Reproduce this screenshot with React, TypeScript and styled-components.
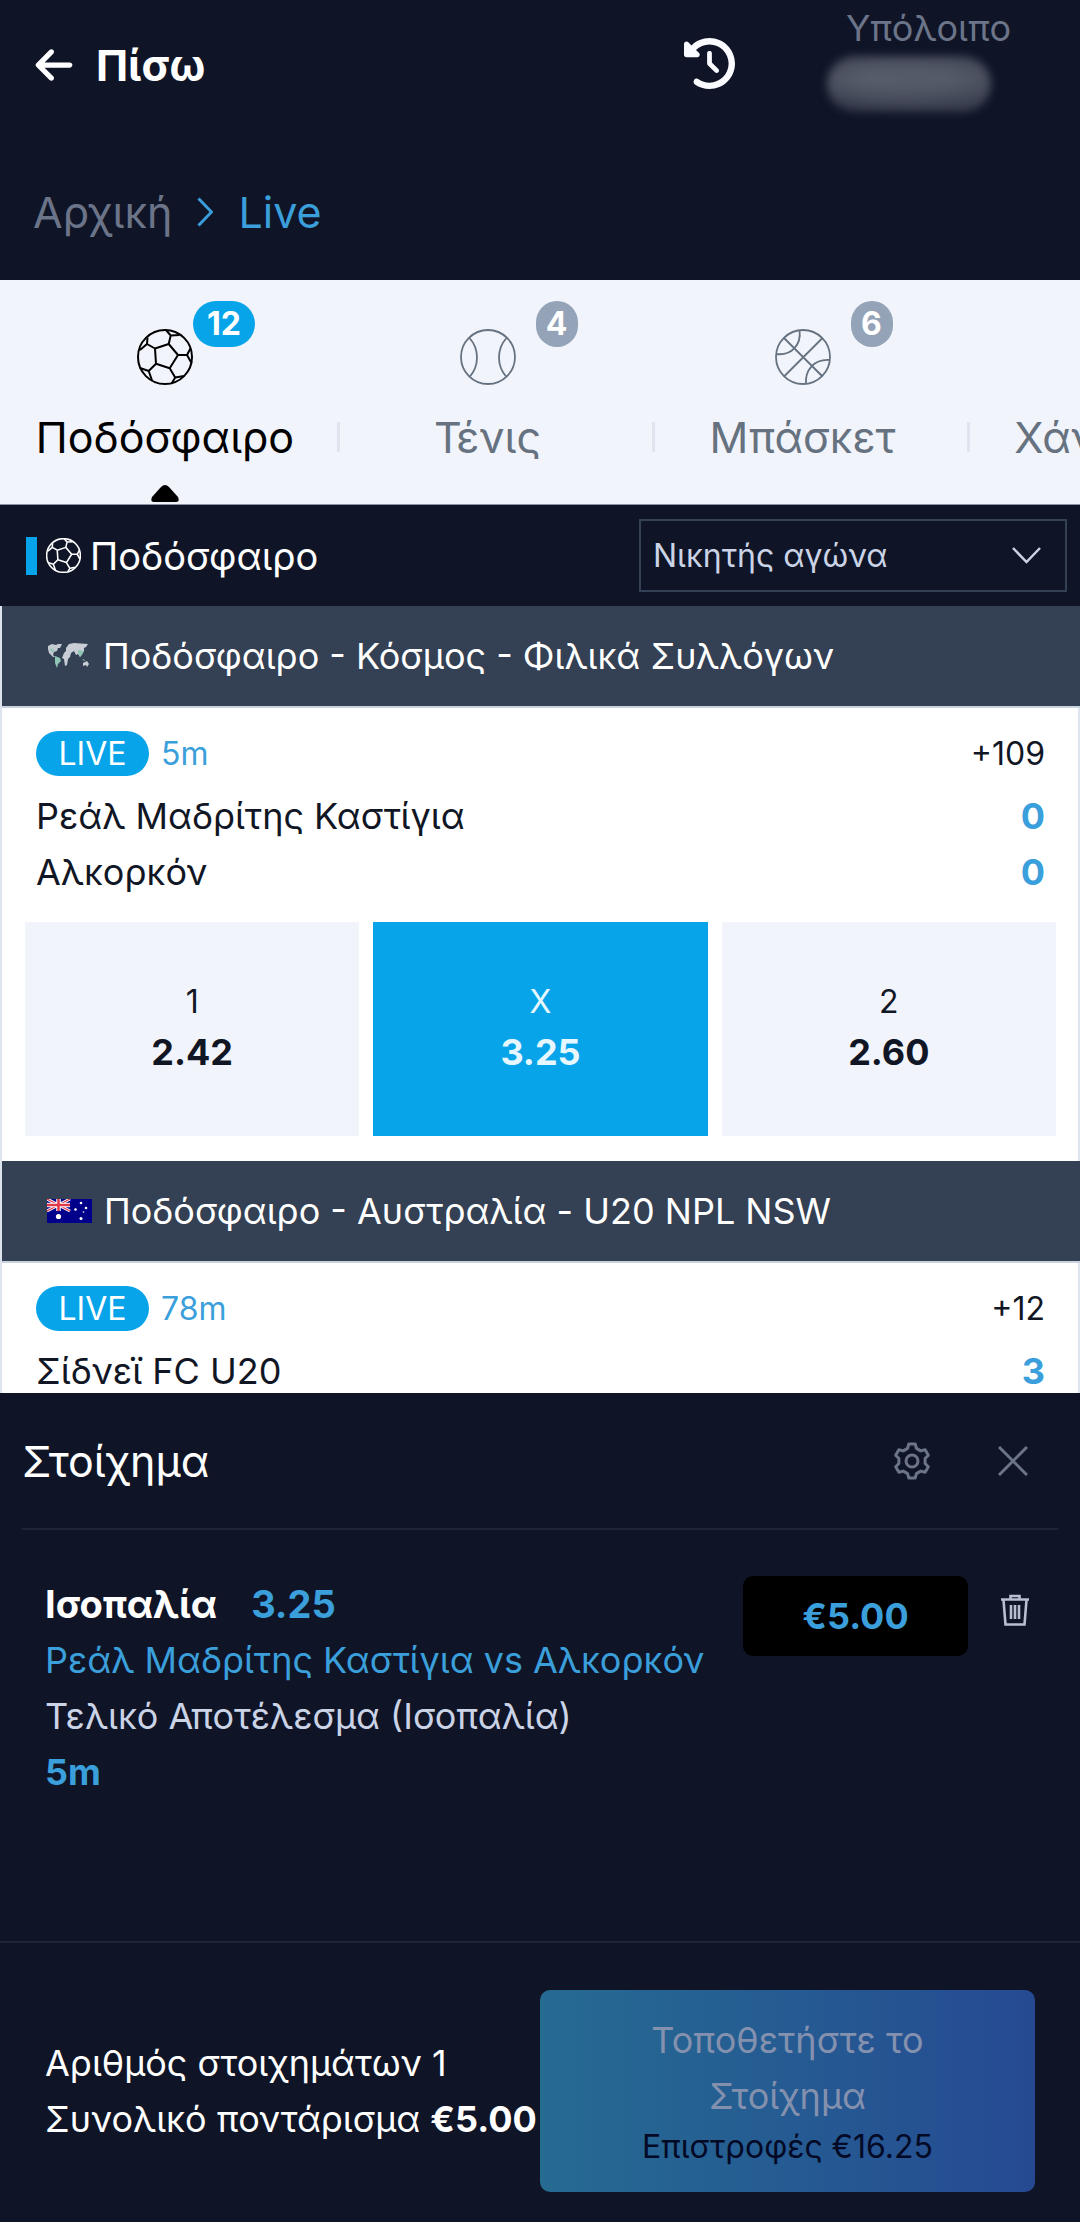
import React from "react";
import styled, { createGlobalStyle, css } from "styled-components";
import { FaArrowLeft, FaClockRotateLeft } from "react-icons/fa6";

const color = {
  night: "#0f1527",
  slate: "#344053",
  mist: "#f2f4fc",
  sky: "#08a4e9",
  link: "#3a9fda",
  muted: "#6b7488",
  tab: "#66727f",
  badge: "#94a3b8",
  line: "#1d2537",
  edge: "#dde4ee",
  pale: "#cbd3e6",
};

const size = { sm: "32px", md: "36px", title: "38px", lg: "43px" };

const Global = createGlobalStyle`
  *, *::before, *::after { box-sizing: border-box; }
  body { margin: 0; background: ${color.night}; }
  body, button, input, select { font-family: Inter, "Noto Sans", sans-serif; }
  button { border: 0; padding: 0; background: none; cursor: pointer; }
  h1, h2, h3, p { margin: 0; font-weight: 400; }
  a { text-decoration: none; color: inherit; }
  svg { display: block; flex: none; }
`;

const Page = styled.div`
  display: flex;
  flex-direction: column;
  height: 100vh;
  overflow: hidden;
  font-size: ${size.md};
  line-height: 56px;
  color: #fff;
  background: ${color.night};
`;

/* Header */
const TopBar = styled.header`
  display: flex;
  align-items: center;
  flex: none;
  height: 130px;
  padding: 0 69px 0 33px;
`;
const BackButton = styled.button`
  display: flex;
  align-items: center;
  gap: 21px;
  margin-right: auto;
  color: #fff;
  font-size: ${size.lg};
  font-weight: 700;
`;
const HistoryButton = styled.button`
  margin: 0 90px 4px 0;
  color: #fafbff;
`;
const Balance = styled.div`
  display: flex;
  flex-direction: column;
  align-items: flex-end;
  align-self: flex-start;
  width: 186px;
  font-size: ${size.md};
  color: ${color.muted};
`;
const HiddenAmount = styled.div`
  width: 164px;
  height: 56px;
  margin-right: 20px;
  border-radius: 28px;
  background: radial-gradient(ellipse at 30% 40%, #5a5f6d, transparent 70%),
    radial-gradient(ellipse at 70% 40%, #565b69, #2b3042 90%);
  filter: blur(4px);
`;
const Crumbs = styled.nav`
  display: flex;
  align-items: center;
  flex: none;
  gap: 25px;
  padding: 54px 33px 40px;
  font-size: ${size.lg};
  color: ${color.muted};
`;
const CrumbLink = styled.a<{ $current?: boolean }>`
  color: ${(p) => (p.$current ? color.link : color.muted)};
`;

/* Sport tabs */
const Tabs = styled.nav`
  display: grid;
  grid-template-columns: 330px repeat(3, 315px);
  flex: none;
  height: 225px;
  overflow: hidden;
  background: ${color.mist};
  border-bottom: 1px solid #8b93a3;
`;
const Tab = styled.button<{ $active?: boolean; $divided?: boolean }>`
  position: relative;
  display: flex;
  flex-direction: column;
  align-items: center;
  padding-top: 49px;
  font-size: ${size.lg};
  line-height: 56px;
  color: ${(p) => (p.$active ? "#000" : color.tab)};
  ${(p) =>
    p.$divided &&
    css`
      background: linear-gradient(#e0e4ef, #e0e4ef) 7px 142px / 3px 30px no-repeat;
    `}
`;
const TabLabel = styled.span`
  margin-top: 24px;
`;
const TabBadge = styled.span<{ $active?: boolean }>`
  position: absolute;
  top: 21px;
  right: calc(50% - 90px);
  min-width: ${(p) => (p.$active ? "62px" : "42px")};
  border-radius: 23px;
  background: ${(p) => (p.$active ? color.sky : color.badge)};
  color: #fff;
  font-size: ${size.sm};
  font-weight: 700;
  line-height: 46px;
  text-align: center;
`;
const TabArrow = styled.svg`
  margin-top: 20px;
`;

/* Section title */
const SectionBar = styled.div`
  display: flex;
  align-items: center;
  flex: none;
  height: 101px;
  padding: 0 13px 0 26px;
`;
const SectionTitle = styled.h1`
  display: flex;
  align-items: center;
  gap: 9px;
  margin-right: auto;
  font-size: ${size.title};
  &::before {
    content: "";
    width: 11px;
    height: 38px;
    background: ${color.sky};
  }
`;
const MarketBox = styled.label`
  display: grid;
  align-items: center;
  width: 428px;
  height: 73px;
  border: 2px solid ${color.slate};
  & > * {
    grid-area: 1 / 1;
  }
  svg {
    justify-self: end;
    margin-right: 24px;
    pointer-events: none;
  }
`;
const MarketSelect = styled.select`
  appearance: none;
  width: 100%;
  height: 100%;
  padding: 0 60px 0 12px;
  border: 0;
  background: transparent;
  color: ${color.pale};
  font-size: ${size.sm};
`;

/* Matches */
const Feed = styled.main`
  flex: 1;
  min-height: 0;
  overflow: hidden;
  background: #fff;
  border-left: 2px solid ${color.edge};
`;
const League = styled.h2`
  display: flex;
  align-items: center;
  gap: 12px;
  height: 102px;
  padding-left: 45px;
  font-size: ${size.md};
  background: ${color.slate};
  border-bottom: 2px solid #c9d3e0;
`;
const Match = styled.article`
  padding: 23px 22px 25px 23px;
  color: #111625;
  border-right: 2px solid ${color.edge};
`;
const MatchRow = styled.div<{ $gap?: boolean }>`
  display: flex;
  align-items: center;
  padding: 0 11px;
  justify-content: space-between;
  ${(p) => p.$gap && "margin-bottom: 12px;"}
`;
const Status = styled.div`
  display: flex;
  gap: 12px;
  font-size: ${size.sm};
  line-height: 45px;
  color: ${color.link};
`;
const LivePill = styled.span`
  width: 113px;
  border-radius: 23px;
  background: ${color.sky};
  color: #fff;
  text-align: center;
`;
const More = styled.a`
  && {
    color: #111625;
  }
  font-size: ${size.sm};
  line-height: 45px;
`;
const Score = styled.strong`
  color: ${color.link};
`;
const Odds = styled.div`
  display: grid;
  grid-template-columns: repeat(3, 1fr);
  gap: 14px;
  margin-top: 22px;
`;
const Odd = styled.button<{ $picked?: boolean }>`
  display: flex;
  flex-direction: column;
  align-items: center;
  justify-content: center;
  height: 214px;
  padding-bottom: 4px;
  font-size: ${size.sm};
  line-height: 50px;
  background: ${(p) => (p.$picked ? color.sky : color.mist)};
  color: ${(p) => (p.$picked ? "#e6f7ff" : "#111625")};
  strong {
    font-size: ${size.md};
  }
`;

/* Bet slip */
const Slip = styled.section`
  display: flex;
  flex-direction: column;
  flex: none;
  background: ${color.night};
`;
const SlipHeader = styled.div`
  display: flex;
  align-items: center;
  gap: 67px;
  height: 137px;
  margin: 0 22px;
  padding-right: 30px;
  border-bottom: 2px solid ${color.line};
`;
const SlipTitle = styled.h2`
  margin-right: auto;
  font-size: ${size.lg};
`;
const IconButton = styled.button<{ $bright?: boolean }>`
  color: ${(p) => (p.$bright ? "#b9bfd1" : color.muted)};
`;
const SlipBody = styled.div`
  display: flex;
  align-items: flex-start;
  min-height: 411px;
  padding: 46px 51px 0 45px;
`;
const BetInfo = styled.div`
  flex: 1;
  color: ${color.pale};
`;
const Pick = styled.p`
  display: flex;
  gap: 34px;
  color: #fff;
  font-size: ${size.title};
  font-weight: 700;
`;
const Accent = styled.p<{ $bold?: boolean }>`
  color: ${color.link};
  font-weight: ${(p) => (p.$bold ? 700 : 400)};
`;
const StakeInput = styled.input`
  width: 225px;
  height: 80px;
  border: 0;
  border-radius: 10px;
  background: #000;
  color: ${color.link};
  font-size: ${size.md};
  font-weight: 700;
  text-align: center;
`;
const TrashButton = styled(IconButton)`
  margin: 18px 0 0 33px;
`;
const SlipFooter = styled.div`
  display: grid;
  grid-template-columns: 1fr 1fr;
  align-items: center;
  padding: 47px 45px 30px;
  border-top: 2px solid ${color.line};
  white-space: nowrap;
`;
const PlaceBet = styled.button`
  display: flex;
  flex-direction: column;
  align-items: center;
  padding: 22px 90px;
  border-radius: 10px;
  background: linear-gradient(90deg, #266b92, #255b92 50%, #264a92);
  color: #8491ae;
  font-size: ${size.md};
  line-height: 56px;
  white-space: normal;
`;
const Returns = styled.span`
  font-size: ${size.sm};
  line-height: 46px;
  white-space: nowrap;
  color: #040a26;
`;

const Football = ({ px, stroke }: { px: number; stroke: number }) => (
  <svg width={px} height={px} viewBox="0 0 56 56" fill="none" stroke="currentColor" strokeWidth={stroke} strokeLinejoin="round">
    <circle cx="28" cy="28" r="27" />
    <path d="M18 19.5 31.7 15 41 26l-8.3 13.3L19 34.7zM18 19.5 10 15l-7 6M10 15l.5-6.5M31.7 15l2-8.5L29 1M33.700 6.500l8.800-.5M41 26h9l3.700-7M50 26l4.500 8M32.700 39.300l5.500 9.200-3.700 6.300M38.200 48.500l8.800-1.500M19 34.700 11.700 42 3 39M11.700 42l3.500 10" />
  </svg>
);
const TennisBall = () => (
  <svg width="56" height="56" viewBox="0 0 56 56" fill="none" stroke="currentColor" strokeWidth="1.8">
    <circle cx="28" cy="28" r="27" />
    <path d="M9.500 9c10 11 10 28 0 39M46.500 9c-10 11-10 28 0 39" />
  </svg>
);
const Basketball = () => (
  <svg width="56" height="56" viewBox="0 0 56 56" fill="none" stroke="currentColor" strokeWidth="1.8">
    <circle cx="28" cy="28" r="27" />
    <path d="m9 9 38.500 38.500M47.500 9 9 47.500M24.500 1c2 15-8 26-23.500 24M54.500 31C39 30 30 41 31 55" />
  </svg>
);
const Chevron = ({ right }: { right?: boolean }) =>
  right ? (
    <svg width="16" height="30" viewBox="0 0 16 30" fill="none" stroke={color.link} strokeWidth="3">
      <path d="m1.500 1.500 13 13.500-13 13.500" />
    </svg>
  ) : (
    <svg width="29" height="17" viewBox="0 0 29 17" fill="none" stroke={color.pale} strokeWidth="2.500">
      <path d="m1 1 13.500 14L28 1" />
    </svg>
  );
const WorldMap = () => (
  <svg width="44" height="26" viewBox="0 0 44 26">
    <path fill="#c3cad2" d="M1 3 5 1l4 1 2-1 4 0-2 4-2 0-1 3-3 1-1 3 2 2-2 0-4-4-1-4z" />
    <path fill="#8fc5b4" d="M3 5l4 2-1 3-2-2zM8 13l5 2 1 3-3 3-1 4-2-5z" />
    <path fill="#c9ced6" d="M17 10l2-2 0-3 3-4 5-1 14 1-2 3-2 1 0 3-2 2-2 4-2-3-2 1-2-4-3 2-1 4-2 2-1 6-2 1-1-7-2-1z" />
    <path fill="#8fc5b4" d="m31 7 6 1-2 4-2 2-2-4zM35 16l3 1-1 1z" />
    <path fill="#c9ced6" d="m36 20 4-2 2 3-2 3-1-2-3 1z" />
  </svg>
);
const AustraliaFlag = () => (
  <svg width="45" height="24" viewBox="0 0 45 24">
    <path fill="#00008b" d="M0 0h45v24H0z" />
    <path stroke="#fff" strokeWidth="3" d="m0 0 23 12M23 0 0 12" />
    <path stroke="#e0384a" strokeWidth="1.200" d="m0 0 23 12M23 0 0 12" />
    <path stroke="#fff" strokeWidth="4.500" d="M11.500 0v12M0 6h23" />
    <path stroke="#e0384a" strokeWidth="2.500" d="M11.500 0v12M0 6h23" />
    <g fill="#fff">
      <circle cx="11.500" cy="17.500" r="2.600" />
      <circle cx="34" cy="4" r="1.300" />
      <circle cx="28.500" cy="10.500" r="1.300" />
      <circle cx="39" cy="9" r="1.300" />
      <circle cx="36.500" cy="13" r=".8" />
      <circle cx="34" cy="19.500" r="1.500" />
    </g>
  </svg>
);

const tooth: [number, number][] = [[-4.4, -12.6], [-3.2, -17], [3.2, -17], [4.4, -12.6]];
const gearPoints = [0, 60, 120, 180, 240, 300]
  .flatMap((deg) => {
    const a = (deg * Math.PI) / 180;
    return tooth.map(([x, y]) => `${x * Math.cos(a) - y * Math.sin(a)},${x * Math.sin(a) + y * Math.cos(a)}`);
  })
  .join(" ");
const Gear = () => (
  <svg width="38" height="38" viewBox="-19 -19 38 38" fill="none" stroke="currentColor" strokeWidth="3" strokeLinejoin="round">
    <polygon points={gearPoints} />
    <circle r="6" />
  </svg>
);
const Cross = () => (
  <svg width="30" height="30" viewBox="0 0 30 30" fill="none" stroke="currentColor" strokeWidth="3">
    <path d="m1 1 28 28M29 1 1 29" />
  </svg>
);
const Trash = () => (
  <svg width="28" height="32" viewBox="0 0 28 32" fill="none" stroke="currentColor" strokeWidth="2.600">
    <path d="M0 5.500h28M9.500 5V2h9v3M2.500 6l2 24.500h19l2-24.500M10 11v14M14 11v14M18 11v14" />
  </svg>
);

const sports = [
  { name: "Ποδόσφαιρο", count: 12, icon: <Football px={56} stroke={2} />, active: true },
  { name: "Τένις", count: 4, icon: <TennisBall /> },
  { name: "Μπάσκετ", count: 6, icon: <Basketball /> },
  { name: "Χάντμπολ", icon: <TennisBall /> },
];

type MatchData = { minute: string; more: string; teams: [string, number][]; odds: [string, string][]; picked?: string };
const leagues: { title: string; flag: React.ReactNode; match: MatchData }[] = [
  {
    title: "Ποδόσφαιρο - Κόσμος - Φιλικά Συλλόγων",
    flag: <WorldMap />,
    match: {
      minute: "5m",
      more: "+109",
      teams: [["Ρεάλ Μαδρίτης Καστίγια", 0], ["Αλκορκόν", 0]],
      odds: [["1", "2.42"], ["X", "3.25"], ["2", "2.60"]],
      picked: "X",
    },
  },
  {
    title: "Ποδόσφαιρο - Αυστραλία - U20 NPL NSW",
    flag: <AustraliaFlag />,
    match: { minute: "78m", more: "+12", teams: [["Σίδνεϊ FC U20", 3]], odds: [] },
  },
];

const MatchCard = ({ match }: { match: MatchData }) => (
  <Match>
    <MatchRow $gap>
      <Status>
        <LivePill>LIVE</LivePill>
        {match.minute}
      </Status>
      <More href="#markets">{match.more}</More>
    </MatchRow>
    {match.teams.map(([team, score]) => (
      <MatchRow key={team}>
        <span>{team}</span>
        <Score>{score}</Score>
      </MatchRow>
    ))}
    {match.odds.length > 0 && (
      <Odds>
        {match.odds.map(([label, price]) => (
          <Odd key={label} $picked={label === match.picked} aria-pressed={label === match.picked}>
            <span>{label}</span>
            <strong>{price}</strong>
          </Odd>
        ))}
      </Odds>
    )}
  </Match>
);

export default function App() {
  return (
    <Page>
      <Global />
      <TopBar>
        <BackButton>
          <FaArrowLeft size={42} />
          Πίσω
        </BackButton>
        <HistoryButton aria-label="Ιστορικό">
          <FaClockRotateLeft size={51} />
        </HistoryButton>
        <Balance>
          Υπόλοιπο
          <HiddenAmount />
        </Balance>
      </TopBar>
      <Crumbs>
        <CrumbLink href="#home">Αρχική</CrumbLink>
        <Chevron right />
        <CrumbLink href="#live" $current>
          Live
        </CrumbLink>
      </Crumbs>
      <Tabs>
        {sports.map((s, i) => (
          <Tab key={s.name} $active={s.active} $divided={i > 0}>
            {s.icon}
            {s.count && <TabBadge $active={s.active}>{s.count}</TabBadge>}
            <TabLabel>{s.name}</TabLabel>
            {s.active && (
              <TabArrow width="28" height="17" viewBox="0 0 28 17">
                <path d="M14 0q2 0 4 2l9 10q2 5-2 5H3q-4 0-2-5L10 2q2-2 4-2z" />
              </TabArrow>
            )}
          </Tab>
        ))}
      </Tabs>
      <SectionBar>
        <SectionTitle>
          <Football px={35} stroke={2.5} />
          Ποδόσφαιρο
        </SectionTitle>
        <MarketBox>
          <MarketSelect aria-label="Αγορά" defaultValue="winner">
            <option value="winner">Νικητής αγώνα</option>
          </MarketSelect>
          <Chevron />
        </MarketBox>
      </SectionBar>
      <Feed>
        {leagues.map((l) => (
          <React.Fragment key={l.title}>
            <League>
              {l.flag}
              {l.title}
            </League>
            <MatchCard match={l.match} />
          </React.Fragment>
        ))}
      </Feed>
      <Slip>
        <SlipHeader>
          <SlipTitle>Στοίχημα</SlipTitle>
          <IconButton aria-label="Ρυθμίσεις">
            <Gear />
          </IconButton>
          <IconButton aria-label="Κλείσιμο">
            <Cross />
          </IconButton>
        </SlipHeader>
        <SlipBody>
          <BetInfo>
            <Pick>
              <span>Ισοπαλία</span>
              <Accent as="span" $bold>
                3.25
              </Accent>
            </Pick>
            <Accent>Ρεάλ Μαδρίτης Καστίγια vs Αλκορκόν</Accent>
            <p>Τελικό Αποτέλεσμα (Ισοπαλία)</p>
            <Accent $bold>5m</Accent>
          </BetInfo>
          <StakeInput aria-label="Ποντάρισμα" defaultValue="€5.00" />
          <TrashButton $bright aria-label="Διαγραφή">
            <Trash />
          </TrashButton>
        </SlipBody>
        <SlipFooter>
          <div>
            <p>Αριθμός στοιχημάτων 1</p>
            <p>
              Συνολικό ποντάρισμα <strong>€5.00</strong>
            </p>
          </div>
          <PlaceBet>
            <span>Τοποθετήστε το Στοίχημα</span>
            <Returns>Επιστροφές €16.25</Returns>
          </PlaceBet>
        </SlipFooter>
      </Slip>
    </Page>
  );
}
